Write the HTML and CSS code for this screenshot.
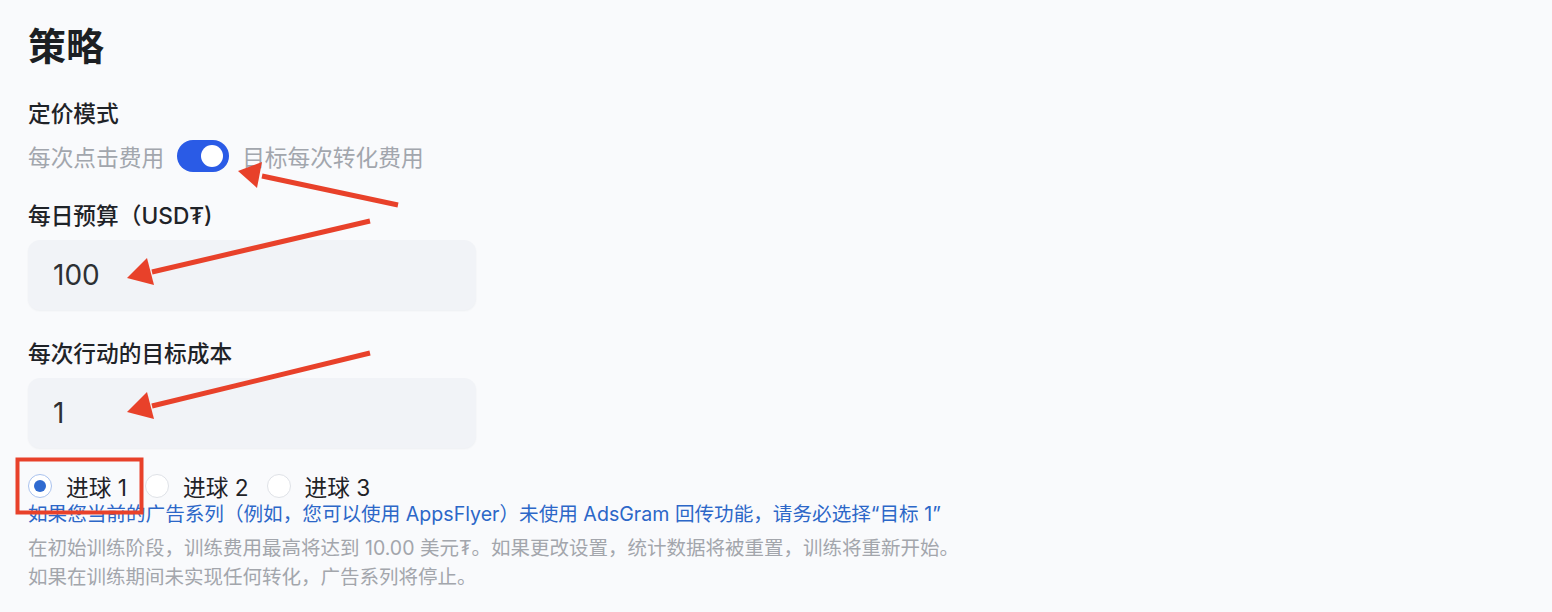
FILE: index.html
```html
<!DOCTYPE html>
<html lang="zh">
<head>
<meta charset="utf-8">
<title>策略</title>
<link rel="stylesheet" href="styles.css">
</head>
<body>
<div class="page">
  <h1 class="title">策略</h1>

  <div class="label label-first">定价模式</div>
  <div class="toggle-row">
    <span class="opt">每次点击费用</span>
    <span class="toggle"><span class="knob"></span></span>
    <span class="opt">目标每次转化费用</span>
  </div>

  <div class="label">每日预算（USD₮)</div>
  <div class="input">100</div>

  <div class="label">每次行动的目标成本</div>
  <div class="input">1</div>

  <div class="radios">
    <label class="radio"><span class="circle checked"></span><span class="rtext">进球 1</span></label>
    <label class="radio"><span class="circle"></span><span class="rtext">进球 2</span></label>
    <label class="radio"><span class="circle"></span><span class="rtext">进球 3</span></label>
  </div>
  <p class="note">如果您当前的广告系列（例如，您可以使用 AppsFlyer）未使用 AdsGram 回传功能，请务必选择“目标 1”</p>
  <p class="hint">在初始训练阶段，训练费用最高将达到 10.00 美元₮。如果更改设置，统计数据将被重置，训练将重新开始。<br>如果在训练期间未实现任何转化，广告系列将停止。</p>
</div>

<svg class="annot" width="1552" height="612" viewBox="0 0 1552 612">
  <g stroke="#e8412a" stroke-width="5" stroke-linecap="butt" fill="none">
    <line x1="398" y1="205" x2="262" y2="176"/>
    <line x1="370" y1="221" x2="152" y2="272"/>
    <line x1="370" y1="353" x2="152" y2="406"/>
  </g>
  <g fill="#e8412a">
    <polygon points="238,171 262,162 257,188"/>
    <polygon points="127,278 147,258 154,285"/>
    <polygon points="127,412 147,392 154,419"/>
  </g>
  <rect x="17.5" y="459.5" width="124" height="53" fill="none" stroke="#e8412a" stroke-width="4"/>
</svg>
</body>
</html>
```

FILE: styles.css
```css
html, body {
  margin: 0;
  padding: 0;
  background: #f9fafc;
}
body {
  font-family: Inter, "Noto Sans CJK SC", sans-serif;
  color: #1f2328;
  position: relative;
  width: 1552px;
  height: 612px;
  overflow: hidden;
}
.page {
  padding: 22px 0 0 28px;
}
.title {
  margin: 0;
  font-size: 38px;
  line-height: 48px;
  font-weight: 700;
  color: #1c1f23;
}
.label {
  font-size: 22.7px;
  line-height: 30px;
  font-weight: 500;
  color: #1f2328;
  margin-top: 29px;
}
.label-first {
  margin-top: 29px;
}
.toggle-row {
  display: flex;
  align-items: center;
  gap: 13px;
  height: 32px;
  margin-top: 11px;
}
.opt {
  font-size: 22.7px;
  color: #a2a6ad;
}
.toggle {
  display: flex;
  align-items: center;
  justify-content: flex-end;
  width: 52px;
  height: 32px;
  border-radius: 16px;
  background: #2a5be6;
  padding: 0 6px;
  box-sizing: border-box;
}
.knob {
  width: 22px;
  height: 22px;
  border-radius: 50%;
  background: #fff;
}
.input {
  margin-top: 9px;
  width: 448px;
  height: 70px;
  box-sizing: border-box;
  background: #f1f3f7;
  border-radius: 12px;
  box-shadow: 0 1px 2px rgba(20, 30, 60, 0.05);
  padding-left: 25px;
  display: flex;
  align-items: center;
  font-size: 28px;
  color: #2d3034;
}
.radios {
  display: flex;
  align-items: center;
  margin-top: 26px;
  height: 24px;
}
.radio {
  display: flex;
  align-items: center;
  margin-right: 18px;
}
.circle {
  width: 24px;
  height: 24px;
  box-sizing: border-box;
  border-radius: 50%;
  border: 1px solid #dfe2e7;
  background: #fff;
  display: flex;
  align-items: center;
  justify-content: center;
}
.circle.checked {
  border-color: #a9c2ee;
}
.circle.checked::after {
  content: "";
  width: 12px;
  height: 12px;
  border-radius: 50%;
  background: #2f6ad0;
}
.rtext {
  margin-left: 14px;
  font-size: 22.7px;
  color: #1f2328;
}
.note {
  margin: 3px 0 0;
  font-size: 19.6px;
  line-height: 26px;
  color: #2c67c8;
}
.hint {
  margin: 7px 0 0;
  font-size: 19.5px;
  line-height: 29px;
  color: #a3a6ac;
}
.annot {
  position: absolute;
  left: 0;
  top: 0;
  pointer-events: none;
}
```
